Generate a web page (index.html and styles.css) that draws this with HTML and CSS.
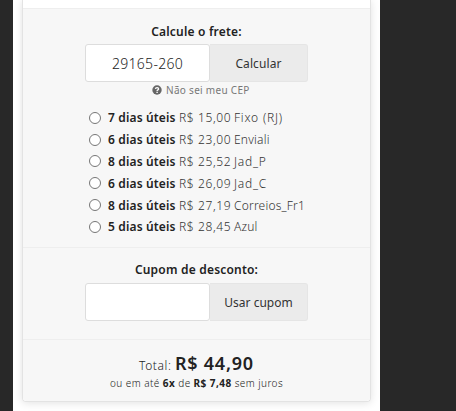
FILE: index.html
```
<!DOCTYPE html>
<html lang="pt-BR">
  <head>
    <meta charset="utf-8">
    <title>Carrinho</title>
    <link rel="stylesheet" href="styles.css">
  </head>
  <body>
    <div class="page">
      <div class="cart-box">

        <div class="section shipping">
          <p class="section-title">Calcule o frete:</p>
          <div class="input-group">
            <input type="text" class="field cep-field" value="29165-260">
            <button class="group-button calc-button">Calcular</button>
          </div>
          <a class="cep-help">
            <svg class="help-icon" viewBox="0 0 10 10">
              <circle cx="5" cy="5" r="4.7" fill="#666"/>
              <path d="M3.4 3.8C3.6 2.2 6.6 2.1 6.6 3.9C6.6 4.9 5.1 4.9 5.1 6" fill="none" stroke="#fff" stroke-width="1.3"/>
              <rect x="4.4" y="6.7" width="1.4" height="1.3" fill="#fff"/>
            </svg>
            <span>Não sei meu CEP</span>
          </a>
          <div class="options">
            <label class="option"><input type="radio" name="frete" class="radio"><b class="days">7 dias úteis</b><span class="price">R$ 15,00</span><span class="carrier wide">Fixo (RJ)</span></label>
            <label class="option"><input type="radio" name="frete" class="radio"><b class="days">6 dias úteis</b><span class="price">R$ 23,00</span><span class="carrier">Enviali</span></label>
            <label class="option"><input type="radio" name="frete" class="radio"><b class="days">8 dias úteis</b><span class="price">R$ 25,52</span><span class="carrier wide">Jad_P</span></label>
            <label class="option"><input type="radio" name="frete" class="radio"><b class="days">6 dias úteis</b><span class="price">R$ 26,09</span><span class="carrier wide">Jad_C</span></label>
            <label class="option"><input type="radio" name="frete" class="radio"><b class="days">8 dias úteis</b><span class="price">R$ 27,19</span><span class="carrier">Correios_Fr1</span></label>
            <label class="option"><input type="radio" name="frete" class="radio"><b class="days">5 dias úteis</b><span class="price">R$ 28,45</span><span class="carrier">Azul</span></label>
          </div>
        </div>

        <div class="section coupon">
          <p class="section-title coupon-title">Cupom de desconto:</p>
          <div class="input-group">
            <input type="text" class="field">
            <button class="group-button">Usar cupom</button>
          </div>
        </div>

        <div class="section total">
          <p class="total-line"><span class="total-label">Total:</span><b class="total-value">R$ 44,90</b></p>
          <p class="installments"><span>ou em até</span><b>6x</b><span>de</span><b>R$ 7,48</b><span>sem juros</span></p>
        </div>

      </div>
    </div>
  </body>
</html>
```

FILE: styles.css
```
* {
  box-sizing: border-box;
}

body {
  margin: 0;
  height: 411px;
  overflow: hidden;
  background-color: #282828;
  font-family: "Noto Sans", "Open Sans", sans-serif;
  font-size: 12px;
  color: #222;
}

p {
  margin: 0;
}

.page {
  width: 367px;
  height: 411px;
  margin-left: 13px;
  padding: 0 9px;
  background-color: white;
}

.cart-box {
  height: 402px;
  padding-top: 8px;
  border: 1px solid #e3e3e3;
  border-top: none;
  border-radius: 0 0 4px 4px;
  box-shadow: 0 1px 8px rgba(0, 0, 0, 0.12);
}

.section {
  border-top: 1px solid #eee;
  background-color: #f7f7f7;
}

.shipping {
  height: 239px;
  padding-top: 14px;
}

.coupon {
  height: 92px;
  padding-top: 13px;
}

.total {
  height: 62px;
  padding-top: 11px;
  border-radius: 0 0 4px 4px;
}

.section-title {
  height: 21px;
  line-height: 18px;
  font-weight: 600;
  text-align: center;
  letter-spacing: 0.2px;
}

.coupon-title {
  height: 22px;
}

.input-group {
  display: flex;
  width: 223px;
  height: 38px;
  margin-left: 62px;
}

.field {
  width: 125px;
  padding: 0;
  border: 1px solid #ddd;
  border-radius: 3px;
  background-color: white;
  font: 300 14px "Noto Sans", "Open Sans", sans-serif;
  letter-spacing: 0.3px;
  color: #222;
  text-align: center;
  outline: none;
}

.group-button {
  flex: 1;
  padding: 0;
  border: 1px solid #e5e5e5;
  border-left: none;
  border-radius: 0 3px 3px 0;
  background-color: #ebebeb;
  font: 12px "Noto Sans", "Open Sans", sans-serif;
  color: #333;
}

.calc-button {
  letter-spacing: 0.1px;
}

.cep-help {
  display: flex;
  align-items: center;
  height: 15px;
  margin-left: 129px;
  gap: 4px;
  font-size: 10px;
  letter-spacing: 0.3px;
  color: #777;
}

.help-icon {
  width: 10px;
  height: 10px;
}

.options {
  margin: 10px 0 0 66px;
}

.option {
  display: flex;
  align-items: center;
  height: 21.8px;
}

.radio {
  appearance: none;
  width: 12px;
  height: 12px;
  margin: 0 7px 0 0;
  border: 1px solid #767676;
  border-radius: 50%;
  background-color: white;
}

.days {
  width: 71px;
  font-weight: 600;
  letter-spacing: 0.15px;
  white-space: nowrap;
}

.price {
  width: 55px;
  font-weight: 300;
  letter-spacing: 0.6px;
  color: #333;
}

.carrier {
  font-weight: 300;
  letter-spacing: 0.2px;
  color: #333;
}

.wide {
  letter-spacing: 0.8px;
}

.total-line {
  display: flex;
  align-items: baseline;
  margin-left: 116px;
  height: 25px;
  line-height: 25px;
}

.total-label {
  width: 36px;
  font-weight: 300;
  letter-spacing: 0.6px;
}

.total-value {
  font-size: 18px;
  font-weight: 600;
  letter-spacing: 0.75px;
}

.installments {
  display: flex;
  justify-content: center;
  gap: 3px;
  line-height: 14px;
  font-size: 10px;
  font-weight: 300;
  letter-spacing: 0.45px;
}

.installments b {
  font-weight: 700;
}
```
